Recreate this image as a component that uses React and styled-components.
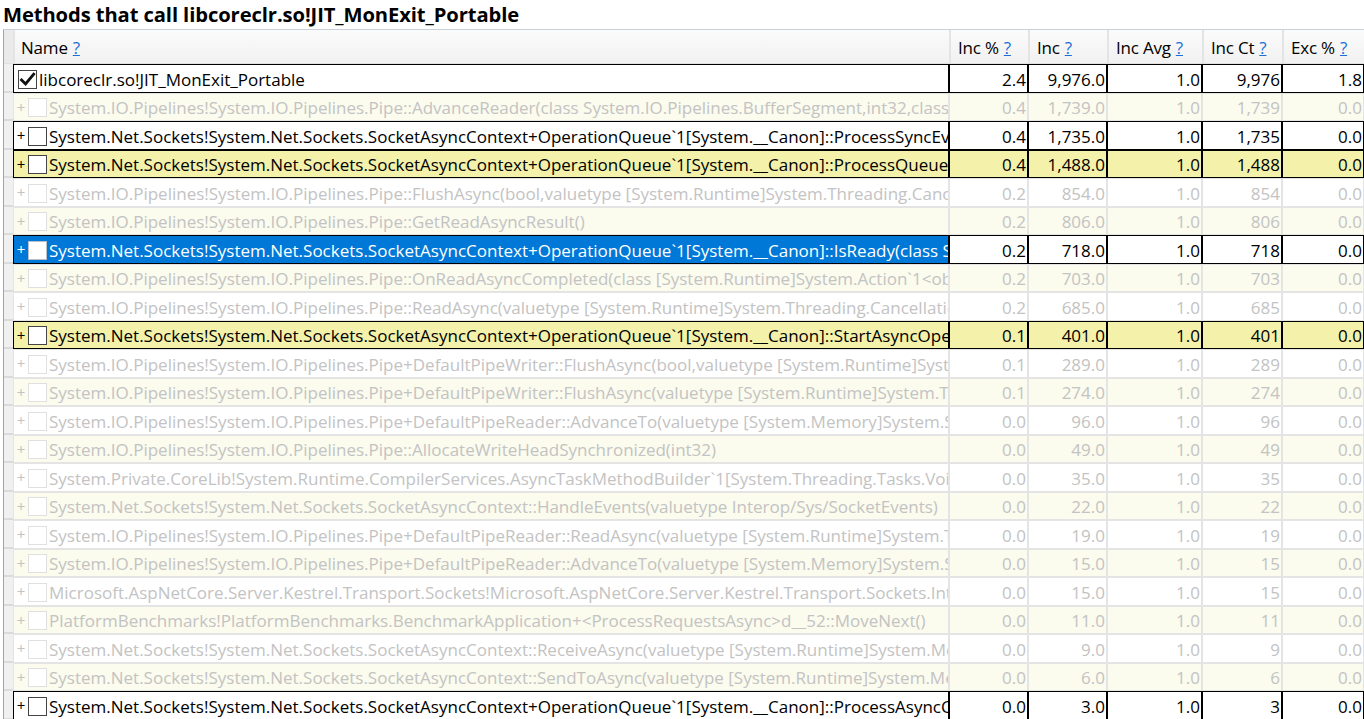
import React from "react";
import styled, { createGlobalStyle } from "styled-components";

const GlobalStyle = createGlobalStyle`
  html, body {
    margin: 0;
    padding: 0;
    background: #ffffff;
    overflow: hidden;
  }
  body {
    font-family: "Open Sans", "Noto Sans", sans-serif;
    color: #000;
  }
`;

const COLS = "9px 936px 79px 79px 95px 80px 82px";

const Page = styled.div`
  width: 1364px;
  height: 719px;
  overflow: hidden;
  padding-left: 3px;
  box-sizing: border-box;
`;

const Title = styled.h1`
  margin: 0;
  height: 29px;
  font-size: 20.2px;
  font-weight: 700;
  line-height: 29px;
  letter-spacing: -0.1px;
  white-space: nowrap;
`;

const Grid = styled.div`
  border-left: 1px solid #9aa6b8;
  border-top: 1px solid #c9d0da;
`;

const HeaderRow = styled.div`
  display: grid;
  grid-template-columns: ${COLS};
  height: 34px;
  background: linear-gradient(#fbfbfb, #f1f1f1);
  border-bottom: 1px solid #e0e0e0;
  box-sizing: border-box;
`;

const HeaderGutter = styled.div`
  background: #eaeaea;
`;

const HeaderCell = styled.div`
  display: flex;
  align-items: center;
  padding-left: ${(p) => p.pad || 7}px;
  padding-top: 1px;
  border-left: 2px solid #e4e4e4;
  font-size: 17px;
  letter-spacing: -0.2px;
  white-space: nowrap;
  overflow: hidden;
`;

const Help = styled.span`
  color: #1a6fd6;
  text-decoration: underline;
  margin-left: 5px;
`;

const Row = styled.div`
  display: grid;
  grid-template-columns: ${COLS};
  height: 28.5px;
`;

const Gutter = styled.div`
  background: #f0f0f0;
  border-bottom: 2px solid #dadada;
  box-sizing: border-box;
`;

const Cell = styled.div`
  box-sizing: border-box;
  min-width: 0;
  border: 1px solid ${(p) => (p.dim ? "#e4e4e4" : "#000")};
  background: ${(p) => (p.sel ? "#0078d7" : p.alt ? (p.dim ? "#fbfbee" : "#f3f1aa") : "#fff")};
  color: ${(p) => (p.sel ? "#fff" : p.dim ? "#c3c3c3" : "#000")};
  font-size: 17px;
  display: flex;
  align-items: center;
  justify-content: ${(p) => (p.num ? "flex-end" : "flex-start")};
  padding: 2px ${(p) => (p.num ? 1 : 0)}px 0 ${(p) => (p.num ? 0 : 2)}px;
  white-space: nowrap;
  overflow: hidden;
`;

const Plus = styled.span`
  align-self: flex-start;
  width: 10px;
  flex: none;
  font-size: 15px;
  line-height: 15px;
  margin-top: 4px;
  text-align: center;
`;

const Box = styled.span`
  flex: none;
  width: 19px;
  height: 19px;
  box-sizing: border-box;
  border: 1px solid ${(p) => (p.dim ? "#e0e0e0" : p.sel ? "#b9c2cc" : "#444")};
  background: #fff;
  margin: 0 2px 0 2px;
  display: flex;
  align-items: center;
  justify-content: center;
`;

const Label = styled.span`
  flex: 1 1 auto;
  min-width: 0;
  overflow: hidden;
  white-space: nowrap;
  text-overflow: clip;
`;

const SO = "System.Net.Sockets!System.Net.Sockets.SocketAsyncContext+OperationQueue`1[System.__Canon]::";
const IO = "System.IO.Pipelines!System.IO.Pipelines.Pipe";

const rows = [
  { name: "libcoreclr.so!JIT_MonExit_Portable", v: ["2.4", "9,976.0", "1.0", "9,976", "1.8"], root: true },
  { name: IO + "::AdvanceReader(class System.IO.Pipelines.BufferSegment,int32,class System.IO.Pipelines.BufferSegment,int32)", v: ["0.4", "1,739.0", "1.0", "1,739", "0.0"], dim: true },
  { name: SO + "ProcessSyncEventOrGetAsyncEvent(!0,bool)", v: ["0.4", "1,735.0", "1.0", "1,735", "0.0"] },
  { name: SO + "ProcessQueuedOperations()", v: ["0.4", "1,488.0", "1.0", "1,488", "0.0"] },
  { name: IO + "::FlushAsync(bool,valuetype [System.Runtime]System.Threading.CancellationToken)", v: ["0.2", "854.0", "1.0", "854", "0.0"], dim: true },
  { name: IO + "::GetReadAsyncResult()", v: ["0.2", "806.0", "1.0", "806", "0.0"], dim: true },
  { name: SO + "IsReady(class System.Net.Sockets.SocketAsyncContext+AsyncOperation,int32&)", v: ["0.2", "718.0", "1.0", "718", "0.0"], sel: true },
  { name: IO + "::OnReadAsyncCompleted(class [System.Runtime]System.Action`1<object>,object)", v: ["0.2", "703.0", "1.0", "703", "0.0"], dim: true },
  { name: IO + "::ReadAsync(valuetype [System.Runtime]System.Threading.CancellationToken,class System.IO.Pipelines.PipeReader)", v: ["0.2", "685.0", "1.0", "685", "0.0"], dim: true },
  { name: SO + "StartAsyncOperation(class System.Net.Sockets.SocketAsyncContext,!0)", v: ["0.1", "401.0", "1.0", "401", "0.0"] },
  { name: IO + "+DefaultPipeWriter::FlushAsync(bool,valuetype [System.Runtime]System.Threading.CancellationToken)", v: ["0.1", "289.0", "1.0", "289", "0.0"], dim: true },
  { name: IO + "+DefaultPipeWriter::FlushAsync(valuetype [System.Runtime]System.Threading.CancellationToken)", v: ["0.1", "274.0", "1.0", "274", "0.0"], dim: true },
  { name: IO + "+DefaultPipeReader::AdvanceTo(valuetype [System.Memory]System.SequencePosition)", v: ["0.0", "96.0", "1.0", "96", "0.0"], dim: true },
  { name: IO + "::AllocateWriteHeadSynchronized(int32)", v: ["0.0", "49.0", "1.0", "49", "0.0"], dim: true },
  { name: "System.Private.CoreLib!System.Runtime.CompilerServices.AsyncTaskMethodBuilder`1[System.Threading.Tasks.VoidTaskResult]::SetResult()", v: ["0.0", "35.0", "1.0", "35", "0.0"], dim: true },
  { name: "System.Net.Sockets!System.Net.Sockets.SocketAsyncContext::HandleEvents(valuetype Interop/Sys/SocketEvents)", v: ["0.0", "22.0", "1.0", "22", "0.0"], dim: true },
  { name: IO + "+DefaultPipeReader::ReadAsync(valuetype [System.Runtime]System.Threading.CancellationToken)", v: ["0.0", "19.0", "1.0", "19", "0.0"], dim: true },
  { name: IO + "+DefaultPipeReader::AdvanceTo(valuetype [System.Memory]System.SequencePosition,valuetype [System.Memory]System.SequencePosition)", v: ["0.0", "15.0", "1.0", "15", "0.0"], dim: true },
  { name: "Microsoft.AspNetCore.Server.Kestrel.Transport.Sockets!Microsoft.AspNetCore.Server.Kestrel.Transport.Sockets.Internal.SocketConnection::ProcessReceives()", v: ["0.0", "15.0", "1.0", "15", "0.0"], dim: true },
  { name: "PlatformBenchmarks!PlatformBenchmarks.BenchmarkApplication+<ProcessRequestsAsync>d__52::MoveNext()", v: ["0.0", "11.0", "1.0", "11", "0.0"], dim: true },
  { name: "System.Net.Sockets!System.Net.Sockets.SocketAsyncContext::ReceiveAsync(valuetype [System.Runtime]System.Memory`1<uint8>,valuetype System.Net.Sockets.SocketFlags)", v: ["0.0", "9.0", "1.0", "9", "0.0"], dim: true },
  { name: "System.Net.Sockets!System.Net.Sockets.SocketAsyncContext::SendToAsync(valuetype [System.Runtime]System.Memory`1<uint8>,int32)", v: ["0.0", "6.0", "1.0", "6", "0.0"], dim: true },
  { name: SO + "ProcessAsyncCompletion(!0)", v: ["0.0", "3.0", "1.0", "3", "0.0"] },
];

const headers = ["Inc %", "Inc", "Inc Avg", "Inc Ct", "Exc %"];

function Check() {
  return (
    <svg width="17" height="17" viewBox="0 0 16 16">
      <path d="M2.4 8.4 L6.2 12.2 L13.8 3" fill="none" stroke="#111" strokeWidth="2.7" strokeLinecap="square" />
    </svg>
  );
}

function DataRow({ row, index }) {
  const alt = index % 2 === 1;
  return (
    <Row>
      <Gutter />
      <Cell dim={row.dim} alt={alt} sel={row.sel}>
        {!row.root && <Plus>+</Plus>}
        <Box dim={row.dim} sel={row.sel}>
          {row.root && <Check />}
        </Box>
        <Label>{row.name}</Label>
      </Cell>
      {row.v.map((val, i) => (
        <Cell key={i} num dim={row.dim} alt={alt}>
          {val}
        </Cell>
      ))}
    </Row>
  );
}

export default function App() {
  return (
    <Page>
      <GlobalStyle />
      <Title>Methods that call libcoreclr.so!JIT_MonExit_Portable</Title>
      <Grid>
        <HeaderRow>
          <HeaderGutter />
          <HeaderCell pad={6}>
            Name<Help>?</Help>
          </HeaderCell>
          {headers.map((h) => (
            <HeaderCell key={h}>
              {h}
              <Help>?</Help>
            </HeaderCell>
          ))}
        </HeaderRow>
        {rows.map((r, i) => (
          <DataRow key={i} row={r} index={i} />
        ))}
      </Grid>
    </Page>
  );
}
